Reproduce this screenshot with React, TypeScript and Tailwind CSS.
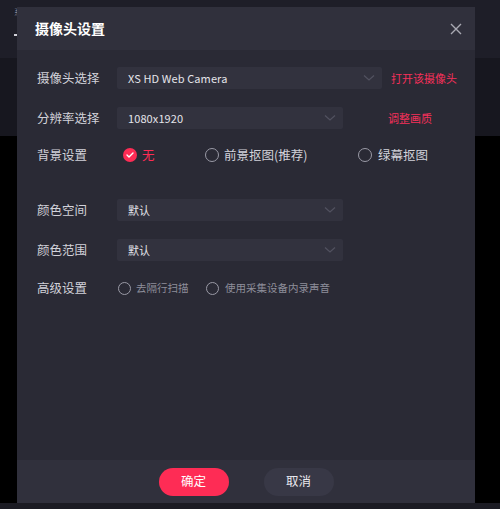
import React from 'react';

const font = { fontFamily: '"Noto Sans CJK SC", "Noto Sans", sans-serif' };

function Chevron() {
  return (
    <svg width="12" height="8" viewBox="0 0 12 8" fill="none" className="shrink-0">
      <path d="M1 1.5l5 4.5 5-4.5" stroke="#51515f" strokeWidth="1.3" />
    </svg>
  );
}

function Select({ value, width }: { value: string; width: string }) {
  return (
    <div className={`${width} h-[22px] bg-[#32323e] rounded-[2px] flex items-center justify-between pl-[11px] pr-[7px]`}>
      <span className="text-[11px] text-[#e4e4ea] leading-none tracking-[0.1px]">{value}</span>
      <Chevron />
    </div>
  );
}

function Radio({ checked, small }: { checked?: boolean; small?: boolean }) {
  const size = small ? 'w-[13px] h-[13px]' : 'w-[14px] h-[14px]';
  if (checked) {
    return (
      <span className={`${size} rounded-full bg-[#fe2c55] flex items-center justify-center shrink-0`}>
        <svg width="8" height="6" viewBox="0 0 8 6" fill="none">
          <path d="M1 3l2 2 4-4" stroke="#fff" strokeWidth="1.4" strokeLinecap="round" strokeLinejoin="round" />
        </svg>
      </span>
    );
  }
  return <span className={`${size} rounded-full border border-[#9a9aa6] shrink-0`} />;
}

function Label({ children }: { children: React.ReactNode }) {
  return <div className="w-[80px] shrink-0 text-[12.5px] text-[#d2d2da]">{children}</div>;
}

export default function App() {
  return (
    <div className="relative w-[500px] h-[509px] flex flex-col bg-black overflow-hidden" style={font}>
      {/* app behind the dialog */}
      <div className="h-[58px] bg-[#1e1e28] flex flex-col px-[14px] pt-[8px] gap-[12px]">
        <span className="text-[8px] text-[#8a8a94] leading-none">系</span>
        <span className="w-[4px] h-[2px] bg-[#d0d0d8] mt-[6px]" />
      </div>
      <div className="h-[78px] bg-[#17171f]" />
      <div className="flex-1 bg-black" />
      <div className="h-[6px] bg-[#1b1b23]" />

      {/* dialog */}
      <div className="absolute left-[17px] top-[7px] w-[458px] h-[496px] flex flex-col bg-[#2a2a35]">
        <div className="h-[43px] bg-[#30303c] flex items-center justify-between pl-[18px] pr-[13px]">
          <span className="text-[14px] font-bold text-white">摄像头设置</span>
          <svg width="12" height="12" viewBox="0 0 12 12" fill="none">
            <path d="M1 1l10 10M11 1L1 11" stroke="#a9a9b3" strokeWidth="1.4" />
          </svg>
        </div>

        <div className="flex-1 flex flex-col pl-[20px] pt-[17px]">
          <div className="flex items-center h-[22px]">
            <Label>摄像头选择</Label>
            <Select value="XS HD Web Camera" width="w-[265px]" />
            <span className="ml-[9px] text-[11px] text-[#f5305a]">打开该摄像头</span>
          </div>

          <div className="flex items-center h-[22px] mt-[18px]">
            <Label>分辨率选择</Label>
            <Select value="1080x1920" width="w-[226px]" />
            <span className="ml-[45px] text-[11px] text-[#f5305a]">调整画质</span>
          </div>

          <div className="flex items-center h-[20px] mt-[16px]">
            <Label>背景设置</Label>
            <div className="flex items-center pl-[6px] gap-[5px] w-[88px]">
              <Radio checked />
              <span className="text-[12.5px] text-[#fe2c55]">无</span>
            </div>
            <div className="flex items-center gap-[5px] w-[153px]">
              <Radio />
              <span className="text-[12.5px] text-[#d2d2da]">前景抠图(推荐)</span>
            </div>
            <div className="flex items-center gap-[6px]">
              <Radio />
              <span className="text-[12.5px] text-[#d2d2da]">绿幕抠图</span>
            </div>
          </div>

          <div className="flex items-center h-[22px] mt-[34px]">
            <Label>颜色空间</Label>
            <Select value="默认" width="w-[226px]" />
          </div>

          <div className="flex items-center h-[22px] mt-[18px]">
            <Label>颜色范围</Label>
            <Select value="默认" width="w-[226px]" />
          </div>

          <div className="flex items-center h-[20px] mt-[17px]">
            <Label>高级设置</Label>
            <div className="flex items-center pl-[1px] gap-[5px] w-[89px]">
              <Radio small />
              <span className="text-[10.5px] text-[#8e8e9a]">去隔行扫描</span>
            </div>
            <div className="flex items-center gap-[6px]">
              <Radio small />
              <span className="text-[10.5px] text-[#8e8e9a]">使用采集设备内录声音</span>
            </div>
          </div>
        </div>

        <div className="h-[43px] bg-[#30303c] flex items-center justify-center gap-[35px]">
          <button className="w-[70px] h-[28px] rounded-full bg-[#fe2c55] text-white text-[12.5px]">确定</button>
          <button className="w-[70px] h-[28px] rounded-full bg-[#383846] text-[#e8e8ee] text-[12.5px]">取消</button>
        </div>
      </div>
    </div>
  );
}
